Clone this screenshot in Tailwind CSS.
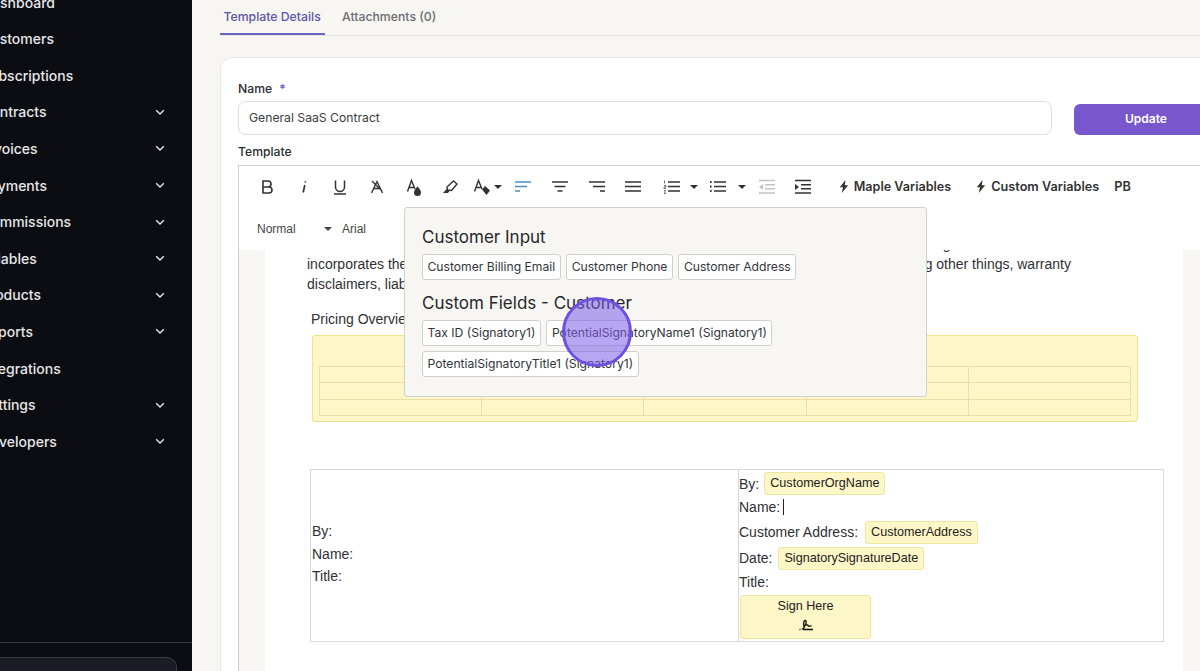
<!DOCTYPE html>
<html lang="en">
<head>
  <meta charset="UTF-8" />
  <title>Template Details</title>
  <script src="https://cdn.jsdelivr.net/npm/@tailwindcss/browser@4"></script>
</head>
<body class="h-[671px] w-[1200px] overflow-hidden bg-[#f7f6f2] font-['Inter',sans-serif] text-[#2b2d33]">
<div class="flex h-[671px] w-[1200px] overflow-hidden">

  <!-- Sidebar -->
  <aside class="flex h-full w-[192px] shrink-0 flex-col overflow-hidden bg-[#0b0d12] text-[14px] font-medium text-[#e6e7ea]">
    <nav class="-mt-[16.2px] flex flex-1 flex-col">
      <div class="flex h-[36.6px] items-center justify-between pr-[27px]"><span class="-ml-[18px]">Dashboard</span></div>
      <div class="flex h-[36.6px] items-center justify-between pr-[27px]"><span class="-ml-[19px]">Customers</span></div>
      <div class="flex h-[36.6px] items-center justify-between pr-[27px]"><span class="-ml-[19px]">Subscriptions</span></div>
      <div class="flex h-[36.6px] items-center justify-between pr-[27px]"><span class="-ml-[19px]">Contracts</span><svg class="h-[10px] w-[10px]" viewBox="0 0 10 10" fill="none" stroke="#e6e7ea" stroke-width="1.4"><path d="M1.2 3.2 5 7l3.8-3.8"/></svg></div>
      <div class="flex h-[36.6px] items-center justify-between pr-[27px]"><span class="-ml-[18px]">Invoices</span><svg class="h-[10px] w-[10px]" viewBox="0 0 10 10" fill="none" stroke="#e6e7ea" stroke-width="1.4"><path d="M1.2 3.2 5 7l3.8-3.8"/></svg></div>
      <div class="flex h-[36.6px] items-center justify-between pr-[27px]"><span class="-ml-[19px]">Payments</span><svg class="h-[10px] w-[10px]" viewBox="0 0 10 10" fill="none" stroke="#e6e7ea" stroke-width="1.4"><path d="M1.2 3.2 5 7l3.8-3.8"/></svg></div>
      <div class="flex h-[36.6px] items-center justify-between pr-[27px]"><span class="-ml-[19px]">Commissions</span><svg class="h-[10px] w-[10px]" viewBox="0 0 10 10" fill="none" stroke="#e6e7ea" stroke-width="1.4"><path d="M1.2 3.2 5 7l3.8-3.8"/></svg></div>
      <div class="flex h-[36.6px] items-center justify-between pr-[27px]"><span class="-ml-[19px]">Billables</span><svg class="h-[10px] w-[10px]" viewBox="0 0 10 10" fill="none" stroke="#e6e7ea" stroke-width="1.4"><path d="M1.2 3.2 5 7l3.8-3.8"/></svg></div>
      <div class="flex h-[36.6px] items-center justify-between pr-[27px]"><span class="-ml-[19px]">Products</span><svg class="h-[10px] w-[10px]" viewBox="0 0 10 10" fill="none" stroke="#e6e7ea" stroke-width="1.4"><path d="M1.2 3.2 5 7l3.8-3.8"/></svg></div>
      <div class="flex h-[36.6px] items-center justify-between pr-[27px]"><span class="-ml-[19px]">Reports</span><svg class="h-[10px] w-[10px]" viewBox="0 0 10 10" fill="none" stroke="#e6e7ea" stroke-width="1.4"><path d="M1.2 3.2 5 7l3.8-3.8"/></svg></div>
      <div class="flex h-[36.6px] items-center justify-between pr-[27px]"><span class="-ml-[19px]">Integrations</span></div>
      <div class="flex h-[36.6px] items-center justify-between pr-[27px]"><span class="-ml-[19px]">Settings</span><svg class="h-[10px] w-[10px]" viewBox="0 0 10 10" fill="none" stroke="#e6e7ea" stroke-width="1.4"><path d="M1.2 3.2 5 7l3.8-3.8"/></svg></div>
      <div class="flex h-[36.6px] items-center justify-between pr-[27px]"><span class="-ml-[19px]">Developers</span><svg class="h-[10px] w-[10px]" viewBox="0 0 10 10" fill="none" stroke="#e6e7ea" stroke-width="1.4"><path d="M1.2 3.2 5 7l3.8-3.8"/></svg></div>
    </nav>
    <div class="h-[29px] shrink-0 border-t border-[#3a3c44] pt-[14px]">
      <div class="-ml-[20px] h-[40px] w-[197px] rounded-[10px] border border-[#3a3c44] bg-[#1b1d26]"></div>
    </div>
  </aside>

  <!-- Main -->
  <main class="relative min-w-0 flex-1 overflow-hidden pl-[28px]">
    <div class="flex h-[36px] items-end gap-[17px] border-b border-[#e6e5e1] text-[12.25px] font-medium">
      <div class="h-[36px] w-[105px] border-b-2 border-[#6c63c4] pl-[3.5px] pt-[9px] text-[#5b55a8]">Template Details</div>
      <div class="h-[36px] pt-[9px] text-[#6b6b70]">Attachments (0)</div>
    </div>

    <section class="mt-[21px] h-[700px] w-[1100px] rounded-[12px] border border-[#e8e7e3] bg-white pl-[17px] pt-[23px]">
      <div class="flex items-center gap-[7px] text-[12.2px] font-medium leading-[16px]">Name <span class="text-[#6c5bc9]">*</span></div>
      <div class="mt-[4px] flex items-center gap-[22px]">
        <div class="flex h-[34px] w-[814px] items-center rounded-[8px] border border-[#dededb] pl-[10px] pt-[1px] text-[12.2px] text-[#3a3c42]">General SaaS Contract</div>
        <div class="mt-[2px] flex h-[31px] w-[150px] items-center justify-center rounded-[6px] bg-[#7856cc] pr-[6px] text-[12px] font-semibold text-white">Update</div>
      </div>
      <div class="mt-[9px] text-[12.2px] font-medium leading-[16px]">Template</div>

      <!-- Editor -->
      <div class="mt-[5px] w-[1000px] border-l border-t border-[#d0d0d0]">
        <div class="h-[84px] bg-white text-[#333]">
          <div class="flex h-[42px] items-center pl-[10px]">
            <div class="flex w-[36.6px] justify-center"><svg class="h-[18px] w-[18px]" viewBox="0 0 18 18" fill="none" stroke="#333" stroke-width="1.6"><path d="M5 3h5a3 3 0 0 1 0 6H5zM5 9h6a3 3 0 0 1 0 6H5z"/></svg></div>
            <div class="flex w-[36.6px] justify-center"><svg class="h-[18px] w-[18px]" viewBox="0 0 18 18" fill="none" stroke="#333" stroke-width="1.7"><path d="M9.800 7 8.200 14.500M10.400 3.200v1.400"/></svg></div>
            <div class="flex w-[36.6px] justify-center"><svg class="h-[18px] w-[18px]" viewBox="0 0 18 18" fill="none" stroke="#333" stroke-width="1.5"><path d="M4.500 2.500V9a4.500 4.500 0 0 0 9 0V2.500M3 16h12"/></svg></div>
            <div class="flex w-[36.6px] justify-center"><svg class="h-[18px] w-[18px]" viewBox="0 0 18 18" fill="none" stroke="#333" stroke-width="1.4"><path d="M3.500 15 9 3.500 14.500 15M6 10.500h6M4 3l10 10"/></svg></div>
            <div class="flex w-[36.6px] justify-center"><svg class="h-[18px] w-[18px] overflow-visible" viewBox="0 0 18 18" fill="none" stroke="#333" stroke-width="1.4"><path d="M2.500 13.500 6.500 2.500 10 11M4 9.500h5"/><path d="M12.500 8.500s-3.500 3.500-3.500 6a3.500 3.500 0 0 0 7 0c0-2.500-3.500-6-3.500-6z" fill="#333" stroke="none"/></svg></div>
            <div class="flex w-[36.6px] justify-center"><svg class="h-[18px] w-[18px]" viewBox="0 0 18 18" fill="none" stroke="#333" stroke-width="1.4"><path d="M6 9 12.500 3 16 6l-5.500 6.500-4-.5z"/><path d="M5.500 11 2 15h5l1.500-2z" fill="#333" stroke="none"/></svg></div>
            <div class="flex w-[36.6px] items-center pl-[4px]"><svg class="h-[18px] w-[18px] shrink-0 overflow-visible" viewBox="0 0 18 18" fill="none" stroke="#333" stroke-width="1.4"><path d="M1.500 13.500 5.500 2.500 9 11M3 9.500h5"/><path d="M9 11.500 12 8l5 4.500-3.500 4.500z" fill="#333" stroke="none"/></svg><span class="ml-[3px] h-0 w-0 shrink-0 border-x-[4px] border-t-[4px] border-x-transparent border-t-[#333]"></span></div>
            <div class="flex w-[36.6px] justify-center"><svg class="h-[18px] w-[18px]" viewBox="0 0 18 18" fill="none" stroke="#4a90c8" stroke-width="1.7"><path d="M1 4h16M1 8.500h12M1 13h5"/></svg></div>
            <div class="flex w-[36.6px] justify-center"><svg class="h-[18px] w-[18px]" viewBox="0 0 18 18" fill="none" stroke="#333" stroke-width="1.7"><path d="M1 4h16M3.500 8.500h11M6.500 13h5"/></svg></div>
            <div class="flex w-[36.6px] justify-center"><svg class="h-[18px] w-[18px]" viewBox="0 0 18 18" fill="none" stroke="#333" stroke-width="1.7"><path d="M1 4h16M5 8.500h12M12 13h5"/></svg></div>
            <div class="flex w-[36.6px] justify-center"><svg class="h-[18px] w-[18px]" viewBox="0 0 18 18" fill="none" stroke="#333" stroke-width="1.7"><path d="M1 4h16M1 8.500h16M1 13h16"/></svg></div>
            <div class="flex w-[46px] items-center pl-[11px]"><svg class="h-[18px] w-[18px] shrink-0" viewBox="0 0 18 18" fill="none" stroke="#333" stroke-width="1.6"><path d="M5 4h12M5 8.500h12M5 13h12"/><path d="M1.500 2.500v3M1 7.500h2v1.500H1v1.500h2M1 12.500h2M1 14h2M1 15.500h2" stroke-width="0.7"/></svg><span class="ml-[9px] h-0 w-0 shrink-0 border-x-[4px] border-t-[4px] border-x-transparent border-t-[#333]"></span></div>
            <div class="flex w-[51px] items-center pl-[11px]"><svg class="h-[18px] w-[18px] shrink-0" viewBox="0 0 18 18" fill="none" stroke="#333" stroke-width="1.6"><path d="M5 4h12M5 8.500h12M5 13h12"/><path d="M1 4h1.600M1 8.500h1.600M1 13h1.600" stroke-width="1.8"/></svg><span class="ml-[11px] h-0 w-0 shrink-0 border-x-[4px] border-t-[4px] border-x-transparent border-t-[#333]"></span></div>
            <div class="flex w-[36.6px] justify-center"><svg class="h-[18px] w-[18px]" viewBox="0 0 18 18" fill="none" stroke="#c4c4c4" stroke-width="1.6"><path d="M1 2.500h16M7 6.800h10M7 10.800h10M1 15h16"/><path d="M5 6v6L1 9z" fill="#c4c4c4" stroke="none"/></svg></div>
            <div class="flex w-[36.6px] justify-center"><svg class="h-[18px] w-[18px]" viewBox="0 0 18 18" fill="none" stroke="#333" stroke-width="1.6"><path d="M1 2.500h16M7 6.800h10M7 10.800h10M1 15h16"/><path d="M1 6v6l4-3z" fill="#333" stroke="none"/></svg></div>
            <div class="ml-[17px] flex items-center gap-[5px] text-[12.6px] font-semibold"><svg class="h-[13px] w-[10px]" viewBox="0 0 10 13" fill="#333"><path d="M6.500 0 .8 7.200h3.200L2.800 13 9.200 5.200H5.800z"/></svg>Maple Variables</div>
            <div class="ml-[25px] flex items-center gap-[5px] text-[12.7px] font-semibold"><svg class="h-[13px] w-[10px]" viewBox="0 0 10 13" fill="#333"><path d="M6.500 0 .8 7.200h3.200L2.800 13 9.200 5.200H5.800z"/></svg>Custom Variables</div>
            <div class="ml-[15px] -mt-[1px] text-[12.7px] font-semibold">PB</div>
          </div>
          <div class="flex h-[42px] items-center pl-[18px] font-['Liberation_Sans',sans-serif] text-[12px] text-[#444]">
            <span class="w-[67px]">Normal</span><span class="h-0 w-0 border-x-[4px] border-t-[4px] border-x-transparent border-t-[#444]"></span><span class="ml-[10px]">Arial</span>
          </div>
        </div>

        <!-- Document -->
        <div class="h-[500px] overflow-hidden bg-[#f7f6f2] pl-[26px]">
          <div class="h-[500px] w-[918px] bg-white pl-[42px] font-['Liberation_Sans',sans-serif] text-[14px] text-[#2f3033]">
            <p class="-mt-[16px] h-[20px] w-[850px] whitespace-nowrap leading-[20px]">The Customer agrees to the terms set out in this Agreement, which may change over time and which Agreement also</p>
            <p class="w-[850px] whitespace-nowrap leading-[20px]">incorporates the Terms of Service, which are also available on our website and which include, among other things, warranty</p>
            <p class="leading-[20px]">disclaimers, liability limits and other terms.</p>
            <p class="mt-[15px] pl-[4px] leading-[20px]">Pricing Overview</p>

            <div class="ml-[5px] mt-[6px] h-[87px] w-[826px] rounded-[3px] border border-[#efe38a] bg-[#fdf6c6] px-[6px] pt-[30px]">
              <div class="grid h-[50px] w-[812px] grid-cols-5 border-l border-t border-[#e8dfaa]">
                <div class="border-b border-r border-[#e8dfaa]"></div><div class="border-b border-r border-[#e8dfaa]"></div><div class="border-b border-r border-[#e8dfaa]"></div><div class="border-b border-r border-[#e8dfaa]"></div><div class="border-b border-r border-[#e8dfaa]"></div>
                <div class="border-b border-r border-[#e8dfaa]"></div><div class="border-b border-r border-[#e8dfaa]"></div><div class="border-b border-r border-[#e8dfaa]"></div><div class="border-b border-r border-[#e8dfaa]"></div><div class="border-b border-r border-[#e8dfaa]"></div>
                <div class="border-b border-r border-[#e8dfaa]"></div><div class="border-b border-r border-[#e8dfaa]"></div><div class="border-b border-r border-[#e8dfaa]"></div><div class="border-b border-r border-[#e8dfaa]"></div><div class="border-b border-r border-[#e8dfaa]"></div>
              </div>
            </div>

            <div class="ml-[3px] mt-[47px] flex h-[173px] w-[854px] border border-[#d8d8d8]">
              <div class="flex w-[428px] flex-col justify-center border-r border-[#d8d8d8] pb-[3px] pl-[1px] leading-[22.5px]">
                <div>By:</div><div>Name:</div><div>Title:</div>
              </div>
              <div class="flex-1 leading-[20px]">
                <div class="flex h-[27px] items-center"><span>By:</span><span class="ml-[5px] rounded-[3px] border border-[#f0e6a0] bg-[#fdf6c6] px-[5px] py-[1px] text-[12.6px] leading-[19px] text-[#222]">CustomerOrgName</span></div>
                <div class="flex h-[20px] items-center"><span>Name:</span><span class="ml-[3px] h-[16px] w-px bg-[#222]"></span></div>
                <div class="flex h-[30px] items-center"><span>Customer Address:</span><span class="ml-[7px] rounded-[3px] border border-[#f0e6a0] bg-[#fdf6c6] px-[5px] py-[1px] text-[12.6px] leading-[19px] text-[#222]">CustomerAddress</span></div>
                <div class="flex h-[22px] items-center"><span>Date:</span><span class="ml-[6px] rounded-[3px] border border-[#f0e6a0] bg-[#fdf6c6] px-[5px] py-[1px] text-[12.6px] leading-[19px] text-[#222]">SignatorySignatureDate</span></div>
                <div class="flex h-[26px] items-center"><span>Title:</span></div>
                <div class="ml-[1px] flex h-[44px] w-[131px] flex-col items-center rounded-[3px] border border-[#f0e6a0] bg-[#fdf6c6] pt-[1px] text-[12.6px] leading-[18px] text-[#222]">
                  <span>Sign Here</span>
                  <svg class="mt-[3px] h-[14px] w-[16px]" viewBox="0 0 16 14" fill="none" stroke="#111" stroke-width="1.4"><path d="M6 9C8 7 9 3 7.500 2.500 6 2 5 5.500 6 8c.6 2-1 3.500-2 2.500M7 7c2-.5 3 0 3.500 1s1.500-.5 3 0M1.500 11.500h1M5 11.500h10"/></svg>
                </div>
              </div>
            </div>
          </div>
        </div>
      </div>
    </section>

    <!-- Variables dropdown -->
    <div class="absolute left-[212px] top-[206.5px] h-[190px] w-[523px] rounded-[3px] border border-[#d0d0cc] bg-[#f7f6f2] pl-[17px] pt-[18px] text-[12.15px] text-[#33353a]">
      <h3 class="text-[17px] leading-[22px] text-[#26272b]">Customer Input</h3>
      <div class="mt-[6px] flex flex-wrap gap-[5.5px]">
        <span class="rounded-[3px] border border-[#cfcfcb] bg-white px-[4.5px] py-[4.5px] leading-[15px]">Customer Billing Email</span>
        <span class="rounded-[3px] border border-[#cfcfcb] bg-white px-[4.5px] py-[4.5px] leading-[15px]">Customer Phone</span>
        <span class="rounded-[3px] border border-[#cfcfcb] bg-white px-[4.5px] py-[4.5px] leading-[15px]">Customer Address</span>
      </div>
      <h3 class="mt-[12px] text-[17px] leading-[22px] text-[#26272b]">Custom Fields - Customer</h3>
      <div class="mt-[6px] flex w-[400px] flex-wrap gap-x-[5.5px] gap-y-[5px]">
        <span class="rounded-[3px] border border-[#cfcfcb] bg-white px-[4.5px] py-[4.5px] leading-[15px]">Tax ID (Signatory1)</span>
        <span class="rounded-[3px] border border-[#cfcfcb] bg-white px-[4.5px] py-[4.5px] leading-[15px]">PotentialSignatoryName1 (Signatory1)</span>
        <span class="rounded-[3px] border border-[#cfcfcb] bg-white px-[4.5px] py-[4.5px] leading-[15px]">PotentialSignatoryTitle1 (Signatory1)</span>
      </div>
    </div>

    <!-- Click highlight -->
    <div class="absolute left-[370px] top-[297px] h-[70px] w-[70px] rounded-full border-[3px] border-[#6f50e0] bg-[#7c5ce8]/55"></div>
  </main>
</div>
</body>
</html>
